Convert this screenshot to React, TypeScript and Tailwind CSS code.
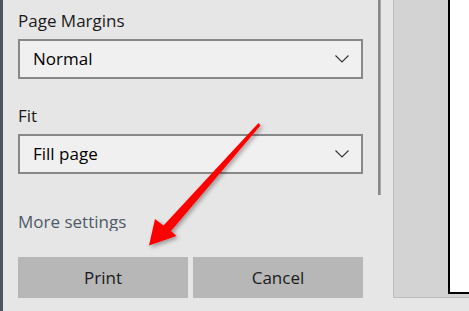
import { ReactNode } from 'react';

function Chevron() {
  return (
    <svg width="16" height="10" viewBox="0 0 16 10" fill="none">
      <path d="M1.5 1.5 L8 8 L14.5 1.5" stroke="#333" strokeWidth="1.1" />
    </svg>
  );
}

function Select({ value }: { value: string }) {
  return (
    <div className="flex h-10 w-[345px] items-center justify-between border-2 border-[#888888] bg-[#f0f0f0] pl-[13px] pr-[11px] text-[17px] text-black">
      <span>{value}</span>
      <Chevron />
    </div>
  );
}

function Label({ children }: { children: ReactNode }) {
  return <div className="mb-[6px] h-6 text-[17px] leading-6 text-[#1a1a1a]">{children}</div>;
}

function RedArrow() {
  return (
    <svg className="pointer-events-none absolute left-0 top-0" width="469" height="311" viewBox="0 0 469 311">
      <defs>
        <filter id="shadow" x="-20%" y="-20%" width="140%" height="140%">
          <feDropShadow dx="2" dy="2" stdDeviation="2" floodColor="#000" floodOpacity="0.35" />
        </filter>
      </defs>
      <polygon
        points="258.5,123 260.5,125.5 171,231 176.5,236 149,245.5 155,219 163.5,225.5"
        fill="#ff0000"
        filter="url(#shadow)"
      />
    </svg>
  );
}

export default function App() {
  return (
    <div className="relative flex h-[311px] w-[469px] overflow-hidden bg-[#e6e6e6] font-['Open_Sans',sans-serif]">
      {/* dark window edge */}
      <div className="w-[3px] bg-[#4b5661]" />

      {/* settings panel */}
      <div className="flex w-[390px]">
        <div className="flex w-[360px] flex-col pl-[15px] pt-[9px]">
          <Label>Page Margins</Label>
          <Select value="Normal" />
          <div className="mt-[25px]">
            <Label>Fit</Label>
          </div>
          <Select value="Fill page" />
          {/* the scroll area cuts the line just under its baseline */}
          <div className="mt-[36px] h-[21px] overflow-hidden text-[17px] leading-6 text-[#4f5a66]">More settings</div>
          <div className="mt-[26px] flex gap-[5px]">
            <button className="h-[41px] w-[170px] bg-[#b7b7b7] text-[17px] text-[#1a1a1a]">Print</button>
            <button className="h-[41px] w-[170px] bg-[#b7b7b7] text-[17px] text-[#1a1a1a]">Cancel</button>
          </div>
        </div>
        {/* scrollbar */}
        <div className="ml-[15px] h-[195px] w-[3px] border-r border-[#a8a8a8] bg-[#888888]" />
      </div>

      {/* preview */}
      <div className="flex flex-1 flex-col">
        <div className="flex h-[298px] border-b border-l border-[#bdbdbd] bg-[#d3d3d3] pl-[54px]">
          <div className="h-[294px] flex-1 border-b-2 border-l-2 border-black bg-white" />
        </div>
      </div>

      <RedArrow />
    </div>
  );
}
